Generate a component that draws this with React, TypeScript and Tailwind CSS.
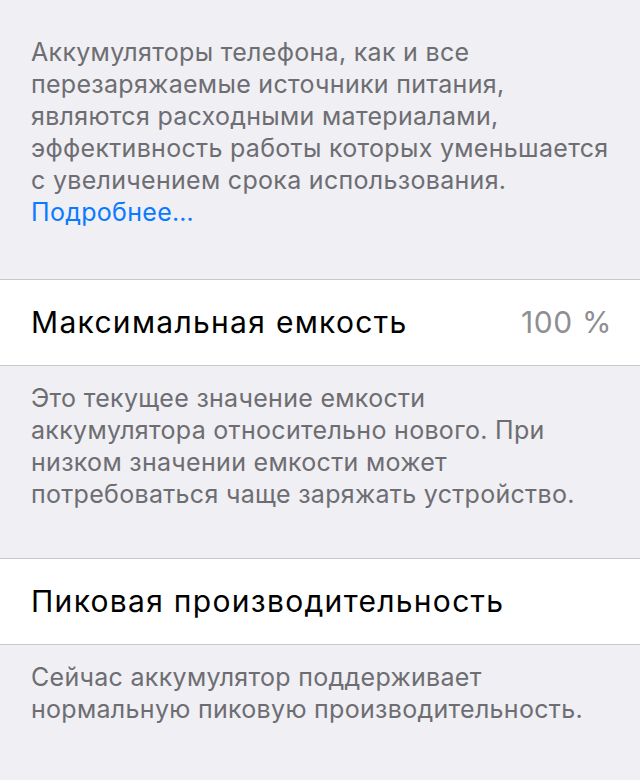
import React from 'react';

const FONT = "font-['Inter','Noto_Sans',sans-serif]";

function Footer({ lines, className }: { lines: React.ReactNode[]; className?: string }) {
  return (
    <div
      className={`px-[31px] text-[25px] leading-[32px] tracking-[0.3px] text-[#6d6d72] ${className ?? ''}`}
    >
      {lines.map((line, i) => (
        <div key={i} className="whitespace-nowrap">
          {line}
        </div>
      ))}
    </div>
  );
}

function Cell({ label, value }: { label: string; value?: string }) {
  return (
    <div className="flex h-[87px] items-center justify-between border-y border-[#c8c7cc] bg-white pl-[31px] pr-[28px] text-[30px]">
      <span className="tracking-[1.3px] text-black">{label}</span>
      {value && <span className="tracking-[0.6px] text-[#8e8e93]">{value}</span>}
    </div>
  );
}

export default function App() {
  return (
    <div className={`min-h-[780px] w-[640px] bg-[#efeff4] ${FONT}`}>
      <Footer
        className="pt-[36px] pb-[51px]"
        lines={[
          'Аккумуляторы телефона, как и все',
          'перезаряжаемые источники питания,',
          'являются расходными материалами,',
          'эффективность работы которых уменьшается',
          'с увеличением срока использования.',
          <span className="text-[#0a7aff]">Подробнее…</span>,
        ]}
      />

      <Cell label="Максимальная емкость" value="100 %" />

      <Footer
        className="pt-[16px] pb-[48px]"
        lines={[
          'Это текущее значение емкости',
          'аккумулятора относительно нового. При',
          'низком значении емкости может',
          'потребоваться чаще заряжать устройство.',
        ]}
      />

      <Cell label="Пиковая производительность" />

      <Footer
        className="pt-[16px]"
        lines={['Сейчас аккумулятор поддерживает', 'нормальную пиковую производительность.']}
      />
    </div>
  );
}
